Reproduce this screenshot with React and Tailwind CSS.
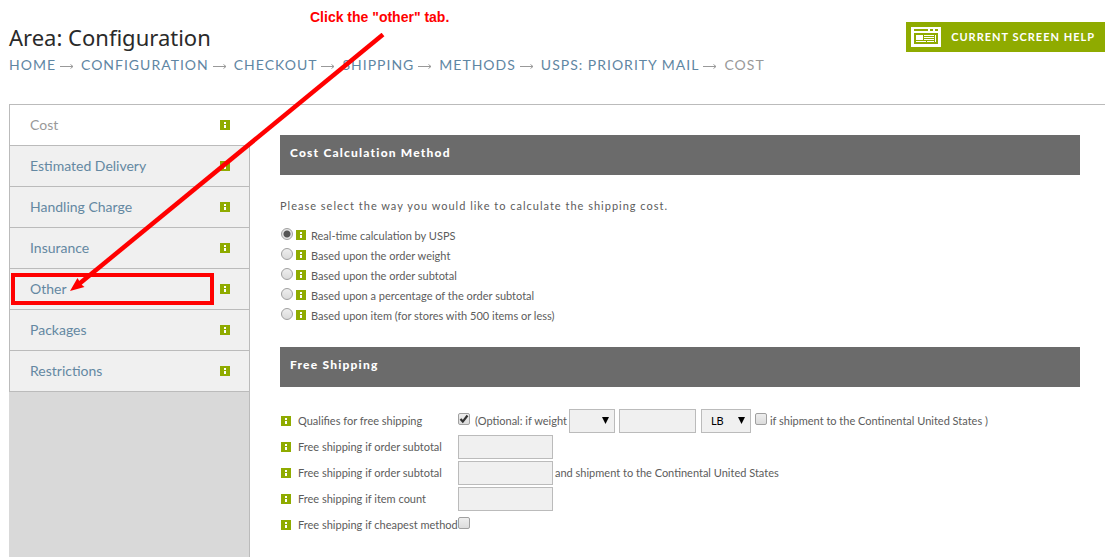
import { Fragment } from 'react';
import clsx from 'clsx';

const crumbs = ['Home', 'Configuration', 'Checkout', 'Shipping', 'Methods', 'USPS: Priority Mail'];

const tabs = ['Cost', 'Estimated Delivery', 'Handling Charge', 'Insurance', 'Other', 'Packages', 'Restrictions'];

const methods = [
  'Real-time calculation by USPS',
  'Based upon the order weight',
  'Based upon the order subtotal',
  'Based upon a percentage of the order subtotal',
  'Based upon item (for stores with 500 items or less)',
];

function InfoIcon() {
  return (
    <svg className="w-[10px] h-[10px] shrink-0" viewBox="0 0 10 10" shapeRendering="crispEdges" aria-hidden="true">
      <rect width="10" height="10" fill="#8fab00" />
      <rect x="4" y="2" width="2" height="2" fill="#fff" />
      <rect x="4" y="5" width="2" height="3" fill="#fff" />
    </svg>
  );
}

function CrumbArrow() {
  return (
    <svg className="w-[14px] h-[7px] ml-1 mr-[7px] mt-[2px] shrink-0" viewBox="0 0 14 7" fill="none" stroke="#999" aria-hidden="true">
      <path d="M0 3.5h13M10.500 1.500l2.500 2L10.500 5.500" />
    </svg>
  );
}

function ScreenIcon() {
  return (
    <svg className="w-[30px] h-5 shrink-0" viewBox="0 0 30 20" shapeRendering="crispEdges" aria-hidden="true">
      <rect width="30" height="20" fill="#fff" />
      <g fill="#8fab00">
        <rect x="3" y="2" width="14" height="2" />
        <rect x="19" y="2" width="3" height="2" />
        <rect x="24" y="2" width="3" height="2" />
        <rect x="3" y="6" width="24" height="11" />
      </g>
      <g fill="#fff">
        <rect x="5" y="8" width="7" height="5" />
        <rect x="13" y="8" width="10" height="1" />
        <rect x="13" y="10" width="10" height="1" />
        <rect x="13" y="12" width="10" height="1" />
        <rect x="24" y="8" width="1" height="7" />
        <rect x="5" y="14" width="10" height="1" />
        <rect x="16" y="14" width="7" height="1" />
      </g>
    </svg>
  );
}

function SectionTitle({ id, children }) {
  return (
    <h2 id={id} className="h-10 px-[10px] pb-1 flex items-center bg-[#6b6b6b] text-white text-xs font-black tracking-widest">
      {children}
    </h2>
  );
}

function Checkbox({ className, ...props }) {
  return (
    <span className={clsx('relative inline-flex shrink-0', className)}>
      <input
        type="checkbox"
        className="peer appearance-none w-3 h-3 rounded-[2px] border border-[#a0a0a0] bg-linear-to-b from-[#eee] to-[#dcdcdc]"
        {...props}
      />
      <svg
        className="hidden peer-checked:block absolute inset-0 w-3 h-3 pointer-events-none"
        viewBox="0 0 12 12"
        fill="none"
        stroke="#333"
        strokeWidth="2.2"
        aria-hidden="true"
      >
        <path d="M2.5 6l2.3 2.6L9.5 2.5" />
      </svg>
    </span>
  );
}

function TextBox({ className, ...props }) {
  return <input type="text" className={clsx('h-6 px-2 border border-[#bbb] bg-[#f0f0f0] text-black', className)} {...props} />;
}

function Select({ className, children, ...props }) {
  return (
    <span className={clsx('relative inline-flex shrink-0', className)}>
      <select className="appearance-none w-full h-6 px-[9px] border border-[#bbb] bg-[#f0f0f0] text-black" {...props}>
        {children}
      </select>
      <svg className="absolute right-[6px] top-2 w-[7px] h-[7px] pointer-events-none" viewBox="0 0 7 7" aria-hidden="true">
        <path d="M0 0h7L3.5 7z" fill="#000" />
      </svg>
    </span>
  );
}

function FormRow({ label, htmlFor, children }) {
  return (
    <div className="flex items-center h-[26px]">
      <div className="flex items-center w-[178px] shrink-0 whitespace-nowrap pl-px">
        <InfoIcon />
        <label htmlFor={htmlFor} className="ml-[7px]">{label}</label>
      </div>
      {children}
    </div>
  );
}

export default function App() {
  return (
    <div className="relative min-h-screen flex flex-col bg-white pl-[9px] pr-[7px] font-['Lato',sans-serif] text-[11px] text-[#5c5c5c]">
      <header className="flex items-start justify-between h-[104px] pt-[22px]">
        <div>
          <h1 className="font-['Noto_Sans',sans-serif] text-[22px] leading-[30px] text-[#2a2a2a]">Area: Configuration</h1>
          <nav aria-label="Breadcrumb" className="flex items-center text-sm leading-[26px] tracking-[1px] uppercase whitespace-nowrap">
            {crumbs.map((crumb) => (
              <Fragment key={crumb}>
                <a href="#" className="text-[#5f86a3]">{crumb}</a>
                <CrumbArrow />
              </Fragment>
            ))}
            <span className="text-[#999]">Cost</span>
          </nav>
        </div>
        <button type="button" className="flex items-center gap-[10px] h-[30px] pl-[5px] pr-[10px] bg-[#8fab00] text-white text-[11px] font-bold tracking-[1px] uppercase whitespace-nowrap">
          <ScreenIcon />
          Current Screen Help
        </button>
      </header>

      <div className="flex-1 flex border-t border-[#bbb]">
        <aside className="w-[241px] shrink-0 flex flex-col">
          <nav aria-label="Shipping method settings">
            {tabs.map((tab, i) => (
              <div
                key={tab}
                className={clsx(
                  'relative flex items-center justify-between h-[41px] pl-5 border-l border-b border-[#bbb]',
                  i === 0 ? 'bg-white pr-5' : 'bg-[#f0f0f0] border-r pr-[19px]'
                )}
              >
                <a href="#" className={clsx('text-sm', i === 0 ? 'text-[#999]' : 'text-[#6488a2]')}>{tab}</a>
                <InfoIcon />
                {tab === 'Other' && (
                  <span className="absolute left-px top-1 w-[203px] h-8 border-4 border-[#f00] pointer-events-none" />
                )}
              </div>
            ))}
          </nav>
          <div className="flex-1 bg-[#d9d9d9] border-r border-[#bbb]" />
        </aside>

        <main className="flex-1 min-w-0 pt-[30px] pl-[30px] pr-[25px]">
          <section>
            <SectionTitle id="cost-method">Cost Calculation Method</SectionTitle>
            <div role="radiogroup" aria-labelledby="cost-method" className="pt-[21px]">
              <p className="leading-5 tracking-[1px]">Please select the way you would like to calculate the shipping cost.</p>
              <div className="pt-[10px]">
                {methods.map((method, i) => (
                  <div key={method} className="flex items-center h-5 pl-px">
                    <input
                      type="radio"
                      name="method"
                      id={`method-${i}`}
                      defaultChecked={i === 0}
                      className="appearance-none w-3 h-3 mb-1 rounded-full border border-[#a0a0a0] bg-linear-to-b from-[#eee] to-[#dadada] checked:bg-[radial-gradient(circle,#555_3px,#e4e4e4_4px)]"
                    />
                    <span className="flex ml-[3px] mb-[2px]"><InfoIcon /></span>
                    <label htmlFor={`method-${i}`} className="ml-[5px]">{method}</label>
                  </div>
                ))}
              </div>
            </div>
          </section>

          <section className="pt-[21px]">
            <SectionTitle id="free-shipping">Free Shipping</SectionTitle>
            <div className="pt-[21px]">
              <FormRow label="Qualifies for free shipping" htmlFor="qualifies">
                <div className="flex items-center whitespace-nowrap">
                  <Checkbox id="qualifies" defaultChecked className="mb-1" />
                  <label htmlFor="weight-rule" className="ml-[5px]">(Optional: if weight</label>
                  <Select id="weight-rule" className="w-[46px] ml-[2px]">
                    <option value=""></option>
                  </Select>
                  <TextBox aria-label="Weight" className="w-[77px] ml-1" />
                  <Select aria-label="Weight unit" className="w-[50px] ml-[5px]">
                    <option>LB</option>
                  </Select>
                  <Checkbox id="continental" className="ml-1 mb-1" />
                  <label htmlFor="continental" className="ml-[3px]">if shipment to the Continental United States )</label>
                </div>
              </FormRow>
              <FormRow label="Free shipping if order subtotal" htmlFor="subtotal">
                <TextBox id="subtotal" className="w-[95px]" />
              </FormRow>
              <FormRow label="Free shipping if order subtotal" htmlFor="subtotal-us">
                <TextBox id="subtotal-us" className="w-[95px]" />
                <span className="ml-[2px]">and shipment to the Continental United States</span>
              </FormRow>
              <FormRow label="Free shipping if item count" htmlFor="item-count">
                <TextBox id="item-count" className="w-[95px]" />
              </FormRow>
              <FormRow label="Free shipping if cheapest method" htmlFor="cheapest">
                <Checkbox id="cheapest" className="mb-1" />
              </FormRow>
            </div>
          </section>
        </main>
      </div>

      {/* Callout pointing at the Other tab */}
      <p className="absolute left-[310px] top-2 font-['Liberation_Sans',sans-serif] text-sm leading-[18px] font-bold text-[#f00] whitespace-nowrap">
        Click the "other" tab.
      </p>
      <svg className="absolute left-[70px] top-[33px] w-[315px] h-[259px] pointer-events-none" viewBox="70 33 315 259" aria-hidden="true">
        <path d="M383 34.5L79 284" stroke="#f00" strokeWidth="4.5" />
        <path d="M70 291l7.500-13 2 3.500 2.500 3.500 2.500 2z" fill="#f00" />
      </svg>
    </div>
  );
}
